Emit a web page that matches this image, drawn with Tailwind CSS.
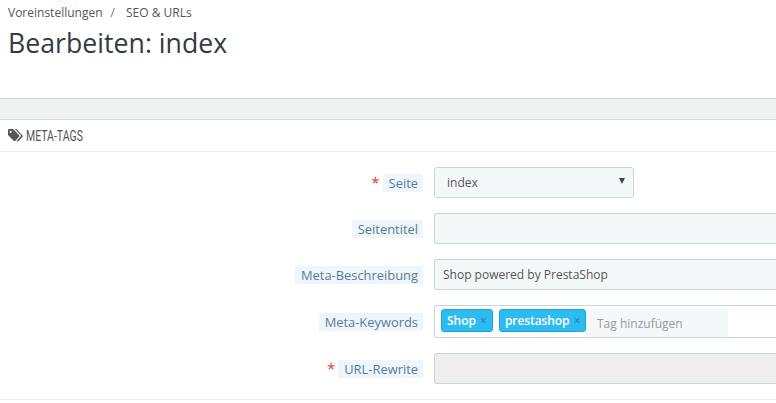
<!DOCTYPE html>
<html><head><meta charset="utf-8"><script src="https://cdn.jsdelivr.net/npm/@tailwindcss/browser@4"></script></head>
<body class="w-[776px] h-[403px] overflow-hidden bg-white font-['Open_Sans',sans-serif] text-[#363a41]">
<div class="h-[99px] pl-2 border-b border-[#d3d8db]">
  <div class="pt-[5px] h-[24px] text-[12px] leading-[16px] text-[#555] flex"><span>Voreinstellungen</span><span class="ml-[8px] mr-[11px] text-[#777]">/</span><span>SEO &amp; URLs</span></div>
  <h1 class="text-[26.7px] leading-[38px] mt-0 font-normal text-[#363a41]">Bearbeiten: index</h1>
</div>
<div class="h-[21px] bg-[#eff1f2] border-b border-[#d3d8db]"></div>
<div class="h-[283px] bg-white rounded-tl-[5px] overflow-hidden">
  <div class="h-[32px] border-b border-[#eeeeee] pl-2 flex items-center gap-[3px]">
    <svg width="15" height="13" viewBox="0 0 15 13" class="text-[#555]" fill="currentColor"><path d="M0 1.2Q0 0 1.2 0H5L11 6Q11.8 6.9 11 7.8L7.5 11.8Q6.6 12.6 5.7 11.8L0 6ZM2.6 1.8A1 1 0 1 0 2.7 3.9A1 1 0 1 0 2.6 1.8Z"/><path d="M7 0H8.3L14.4 6.2Q15.2 7 14.4 7.9L10.4 12.2Q9.6 12.8 8.5 12.2L12.6 7.6Q13.4 6.9 12.6 6Z"/></svg>
    <span class="font-['Roboto',sans-serif] text-[14px] leading-[20px] text-[#555] origin-left scale-x-[0.75] inline-block">META-TAGS</span>
  </div>
  <div class="pt-[15px] flex flex-col">
    <div class="flex h-[46px]">
      <div class="w-[423px] h-[31px] flex justify-end items-center gap-[3px]"><span class="text-[#e3342f] text-[15px] leading-[15px] mt-[-1px]">*</span><span class="h-[18px] pl-[6px] pr-[5px] leading-[18px] text-[12.9px] bg-[#eff6fb] text-[#5b7b95]">Seite</span></div>
      <div class="ml-[11px] w-[200px] h-[31px] bg-[#f5f8f9] border border-[#c7d6db] rounded-[3px] text-[12px] pl-[12px] flex justify-between items-center pr-[8px] text-[#555]"><span class="pt-[1px]">index</span><span class="w-0 h-0 border-x-[3.5px] border-x-transparent border-t-[6px] border-t-[#444] mb-[3px]"></span></div>
    </div>
    <div class="flex h-[46px]">
      <div class="w-[423px] h-[31px] flex justify-end items-center"><span class="h-[18px] pl-[6px] pr-[5px] leading-[18px] text-[12.9px] bg-[#eff6fb] text-[#5b7b95]">Seitentitel</span></div>
      <div class="ml-[11px] flex-1 h-[31px] bg-[#f5f8f9] border border-[#c7d6db] border-r-0 rounded-l-[3px]"></div>
    </div>
    <div class="flex h-[46px]">
      <div class="w-[423px] h-[31px] flex justify-end items-center"><span class="h-[18px] pl-[6px] pr-[5px] leading-[18px] text-[12.9px] bg-[#eff6fb] text-[#5b7b95]">Meta-Beschreibung</span></div>
      <div class="ml-[11px] flex-1 h-[31px] bg-[#f5f8f9] border border-[#c7d6db] border-r-0 rounded-l-[3px] text-[12px] leading-[29px] pl-[8px] text-[#555]">Shop powered by PrestaShop</div>
    </div>
    <div class="flex h-[48px]">
      <div class="w-[423px] h-[33px] flex justify-end items-center"><span class="h-[18px] pl-[6px] pr-[5px] leading-[18px] text-[12.9px] bg-[#eff6fb] text-[#5b7b95]">Meta-Keywords</span></div>
      <div class="ml-[11px] flex-1 h-[33px] bg-white border border-[#c7d6db] border-r-0 rounded-l-[3px] flex items-start pl-[6px] pt-[3px]">
        <span class="h-[23px] w-[52px] mr-[6px] pl-[5px] bg-[#2ebcf0] border border-[#1aa6de] rounded-[3px] text-[12px] font-semibold leading-[21px] text-white flex">Shop<span class="ml-[4px] text-[#1b8fd0] font-bold">×</span></span>
        <span class="h-[23px] w-[87px] pl-[5px] bg-[#2ebcf0] border border-[#1aa6de] rounded-[3px] text-[12px] font-semibold leading-[21px] tracking-[-0.1px] text-white flex">prestashop<span class="ml-[4px] text-[#1b8fd0] font-bold">×</span></span>
        <span class="w-[142px] h-[28px] bg-[#f5f8f9] text-[12px] leading-[29px] pl-[11px] text-[#999]">Tag hinzufügen</span>
      </div>
    </div>
    <div class="flex h-[47px] border-b border-[#eeeeee]">
      <div class="w-[423px] h-[31px] flex justify-end items-center gap-[3px]"><span class="text-[#e3342f] text-[15px] leading-[15px] mt-[-1px]">*</span><span class="h-[18px] pl-[6px] pr-[5px] leading-[18px] text-[12.9px] bg-[#eff6fb] text-[#5b7b95]">URL-Rewrite</span></div>
      <div class="ml-[11px] flex-1 h-[31px] bg-[#eeeeee] border border-[#c7d6db] border-r-0 rounded-l-[3px]"></div>
    </div>
  </div>
</div>
</body></html>
